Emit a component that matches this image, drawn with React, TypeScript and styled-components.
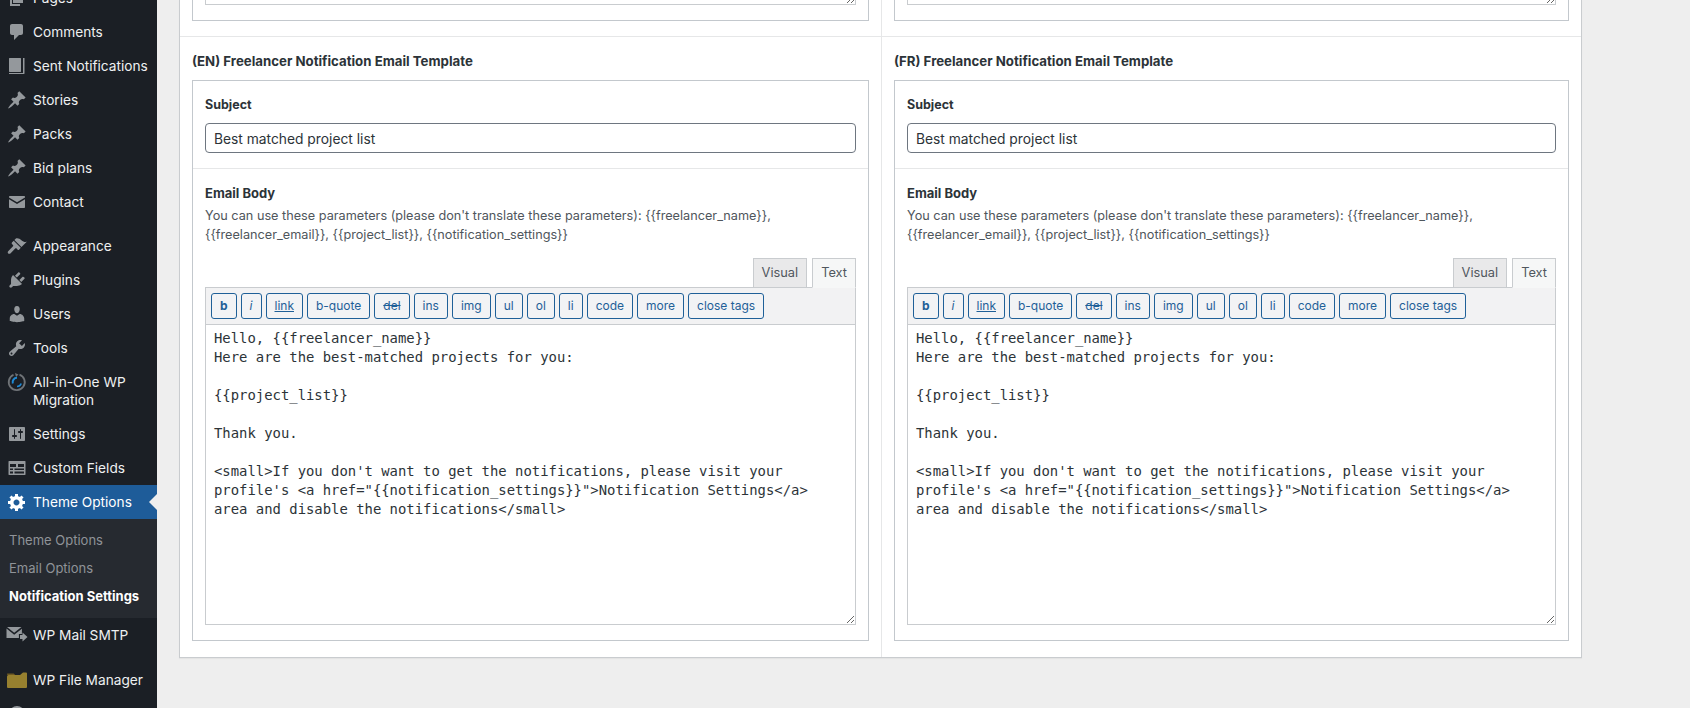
import React from 'react';
import styled, { createGlobalStyle } from 'styled-components';

const GlobalStyle = createGlobalStyle`
    html, body {
        margin: 0;
        height: 708px;
        overflow: hidden;
        background: #eeeeee;
        font-family: Inter, "Liberation Sans", sans-serif;
    }
`

const Page = styled.div`
    display: flex;
    height: 708px;
    overflow: hidden;
`
const Sidebar = styled.nav`
    width: 157px;
    flex-shrink: 0;
    background: #1b1f25;
    overflow: hidden;
`
/* the menu is scrolled, Pages is cut off by the top of the window */
const Menu = styled.ul`
    list-style: none;
    margin: -19px 0 0;
    padding: 0;
`
const Item = styled.li<{ $active?: boolean; $gap?: number }>`
    position: relative;
    display: flex;
    align-items: center;
    min-height: 34px;
    margin-top: ${p => p.$gap || 0}px;
    background: ${p => (p.$active ? '#1e5c99' : 'transparent')};
    color: ${p => (p.$active ? '#ffffff' : '#eef0f1')};
    font-size: 13.7px;
    line-height: 18px;
    box-sizing: border-box;
    padding: 8px 4px 8px 0;
`
const IconSlot = styled.span`
    width: 33px;
    flex-shrink: 0;
    display: flex;
    justify-content: center;
    align-items: center;
    align-self: flex-start;
    height: 18px;
    & svg {
        display: block;
    }
`
const Arrow = styled.span`
    position: absolute;
    right: 0;
    top: 50%;
    margin-top: -8px;
    border: 8px solid transparent;
    border-right-color: #eeeeee;
    border-left-width: 0;
`
const SubMenu = styled.ul`
    list-style: none;
    margin: 0;
    padding: 7px 0 8px;
    background: #262a30;
`
const SubItem = styled.li<{ $current?: boolean }>`
    height: 28px;
    line-height: 28px;
    padding-left: 9px;
    font-size: 13px;
    white-space: nowrap;
    color: ${p => (p.$current ? '#ffffff' : '#8f9398')};
    font-weight: ${p => (p.$current ? 700 : 400)};
`
const Main = styled.main`
    flex: 1;
    min-width: 0;
    padding-left: 22px;
`
const Card = styled.div`
    width: 1403px;
    box-sizing: border-box;
    background: #ffffff;
    border: 1px solid #c9cccf;
    border-top: none;
    display: grid;
    grid-template-columns: 702px 1fr;
    box-shadow: 0 1px 1px rgba(0,0,0,0.04);
`
const Column = styled.div<{ $last?: boolean; $first?: boolean }>`
    box-sizing: border-box;
    padding: ${p => (p.$first ? '0 12px 15px' : '15px 12px 16px')};
    border-right: ${p => (p.$last ? 'none' : '1px solid #e6e7e8')};
    border-bottom: ${p => (p.$first ? '1px solid #e6e7e8' : 'none')};
`
const Title = styled.h3`
    margin: 0 0 10px;
    font-size: 13.25px;
    line-height: 18px;
    font-weight: 700;
    color: #2c3338;
`
const Box = styled.div`
    border: 1px solid #c3c8cd;
`
const TopBox = styled(Box)`
    border-top: none;
    padding: 0 12px 15px;
    height: 21px;
    box-sizing: border-box;
    overflow: hidden;
`
const Section = styled.div<{ $divided?: boolean }>`
    padding: ${p => (p.$divided ? '16px 12px 15px' : '15px 12px')};
    border-bottom: ${p => (p.$divided ? '1px solid #e6e7e8' : 'none')};
`
const SubjectLabel = styled.label`
    display: block;
    font-size: 12.5px;
    line-height: 16px;
    font-weight: 700;
    color: #2c3338;
    margin-bottom: 10px;
`
const SubjectInput = styled.input`
    display: block;
    width: 100%;
    height: 30px;
    box-sizing: border-box;
    border: 1px solid #6e7680;
    border-radius: 4px;
    padding: 1px 8px 0;
    font: 13.8px Inter, sans-serif;
    color: #2c3338;
    background: #fff;
    outline: none;
`
const BodyLabel = styled.div`
    font-size: 13px;
    line-height: 18px;
    font-weight: 700;
    color: #2c3338;
    margin-bottom: 4px;
`
const Help = styled.p`
    margin: 0 0 14px;
    font-size: 12.7px;
    line-height: 19px;
    color: #4f565c;
`
const Tabs = styled.div`
    display: flex;
    justify-content: flex-end;
    gap: 5px;
    margin-bottom: -1px;
    position: relative;
`
const Tab = styled.span<{ $active?: boolean }>`
    box-sizing: border-box;
    height: 30px;
    line-height: 28px;
    padding: 0 8px;
    font-size: 12.8px;
    color: #50575e;
    background: ${p => (p.$active ? '#f6f7f7' : '#e9e9ea')};
    border: 1px solid #c9cccf;
    border-bottom-color: ${p => (p.$active ? '#f6f7f7' : '#c9cccf')};
`
const Toolbar = styled.div`
    display: flex;
    gap: 4px;
    height: 37px;
    box-sizing: border-box;
    padding: 5px 5px 0;
    background: #f2f2f3;
    border: 1px solid #c9cccf;
    border-bottom: none;
`
const TagButton = styled.button<{ $bold?: boolean; $italic?: boolean; $link?: boolean; $strike?: boolean }>`
    height: 26px;
    box-sizing: border-box;
    padding: 0 8px;
    border: 1px solid #1f6098;
    border-radius: 3px;
    background: #f2f3f5;
    color: #1f6098;
    font-family: Inter, sans-serif;
    font-size: 12px;
    line-height: 24px;
    font-weight: ${p => (p.$bold ? 700 : 400)};
    font-style: ${p => (p.$italic ? 'italic' : 'normal')};
    text-decoration: ${p => (p.$link ? 'underline' : p.$strike ? 'line-through' : 'none')};
`
const BodyArea = styled.textarea`
    display: block;
    width: 100%;
    height: 301px;
    box-sizing: border-box;
    margin: 0;
    padding: 4px 8px 3px;
    border: 1px solid #c9cccf;
    border-radius: 0;
    outline: none;
    font-family: "DejaVu Sans Mono", monospace;
    font-size: 13.9px;
    line-height: 19px;
    color: #2c3338;
    background: #fff;
`
const StubArea = styled(BodyArea)`
    height: 60px;
    margin-top: -55px;
`

const PIN = 'M10.44 3.02l1.82-1.82 6.36 6.35-1.83 1.82c-1.05-.68-2.48-.57-3.41.36l-.75.75c-.92.93-1.04 2.35-.35 3.41l-1.83 1.82-2.41-2.41-2.8 2.79c-.42.42-3.38 2.71-3.8 2.29s1.86-3.39 2.28-3.81l2.79-2.79L4.1 9.36l1.83-1.82c1.05.69 2.48.57 3.4-.36l.75-.75c.93-.92 1.05-2.35.36-3.41z';

const Icon: React.FC<{ d: string; color?: string; size?: number }> = ({ d, color = '#94989c', size = 20 }) => (
    <svg width={size} height={size} viewBox="0 0 20 20" fill={color}>
        <path d={d} />
    </svg>
);

const PagesIcon = () => (
    <Icon d="M6 15V2h10v13H6zm-1 1h8v2H3V5h2v11z" />
);
const CommentsIcon = () => (
    <Icon d="M5 2h9c1.1 0 2 .9 2 2v7c0 1.1-.9 2-2 2h-2l-5 5v-5H5c-1.1 0-2-.9-2-2V4c0-1.1.9-2 2-2z" />
);
const BookIcon = () => (
    <Icon size={20} d="M2.500 2h11c.3 0 .5.2.5.5v13c0 .3-.2.5-.5.5h-11c-.3 0-.5-.2-.5-.5v-13c0-.3.2-.5.5-.5zM16 2h1.500v15.500c0 .3-.2.5-.5.5H2v-1h14V2z" />
);
const MailIcon = () => (
    <Icon d="M3 4h14c.6 0 1 .4 1 1v.5l-8 4.800-8-4.800V5c0-.6.4-1 1-1zm-1 3.300l8 4.700 8-4.700V15c0 .6-.4 1-1 1H3c-.6 0-1-.4-1-1V7.300z" />
);
const BrushIcon = () => (
    <Icon d="M14.48 11.06L7.41 3.99l1.5-1.5c.5-.56 2.3-.47 3.51.32 1.21.8 1.43 1.28 2.91 2.1 1.18.64 2.45 1.26 4.45.85zm-.71.71L6.7 4.7 4.93 6.47c-.39.39-.39 1.02 0 1.41l1.06 1.06c.39.39.39 1.03 0 1.42L1.2 15.2c-.6.6-.6 1.6 0 2.2s1.6.6 2.2 0l4.8-4.8c.39-.39 1.03-.39 1.42 0l1.06 1.06c.39.39 1.02.39 1.41 0z" />
);
const PlugIcon = () => (
    <Icon d="M13.11 4.36L9.87 7.6 8 5.73l3.24-3.24c.35-.34 1.05-.2 1.56.32.52.51.66 1.21.31 1.55zm-8 1.77l.91-1.12 9.01 9.01-1.19.84c-.71.71-2.63 1.16-3.82 1.16H6.14L4.9 17.26c-.59.59-1.54.59-2.12 0-.59-.58-.59-1.53 0-2.12l1.24-1.24v-3.88c0-1.13.4-3.19 1.09-3.89zm7.26 3.97l3.24-3.24c.34-.35 1.04-.21 1.55.31.52.51.66 1.21.31 1.55l-3.24 3.25z" />
);
const UserIcon = () => (
    <Icon d="M10 9.25c-2.27 0-2.73-3.44-2.73-3.44C7 4.02 7.82 2 9.97 2c2.16 0 2.98 2.02 2.71 3.81 0 0-.41 3.44-2.68 3.44zm0 2.57L12.72 10c2.39 0 4.52 2.33 4.52 4.53v2.49s-3.65 1.13-7.24 1.13c-3.65 0-7.24-1.13-7.24-1.13v-2.49c0-2.25 1.94-4.48 4.47-4.48z" />
);
const WrenchIcon = () => (
    <Icon d="M16.68 9.77c-1.34 1.34-3.3 1.67-4.95.99l-5.41 6.52c-.99.99-2.59.99-3.58 0s-.99-2.59 0-3.57l6.52-5.42c-.68-1.65-.35-3.61.99-4.95 1.28-1.28 3.12-1.62 4.72-1.06l-2.89 2.89 2.82 2.82 2.86-2.87c.53 1.58.18 3.39-1.08 4.65zM3.81 16.21c.4.39 1.04.39 1.43 0 .4-.4.4-1.04 0-1.43-.39-.4-1.03-.4-1.43 0-.39.39-.39 1.03 0 1.43z" />
);
const SlidersIcon = () => (
    <Icon d="M18 16V4c0-.55-.45-1-1-1H3c-.55 0-1 .45-1 1v12c0 .55.45 1 1 1h14c.55 0 1-.45 1-1zM8 11h1c.55 0 1 .45 1 1s-.45 1-1 1H8v1.5c0 .28-.22.5-.5.5s-.5-.22-.5-.5V13H6c-.55 0-1-.45-1-1s.45-1 1-1h1V5.5c0-.28.22-.5.5-.5s.5.22.5.5V11zm5-2h-1c-.55 0-1-.45-1-1s.45-1 1-1h1V5.5c0-.28.22-.5.5-.5s.5.22.5.5V7h1c.55 0 1 .45 1 1s-.45 1-1 1h-1v5.5c0 .28-.22.5-.5.5s-.5-.22-.5-.5V9z" />
);
const GearIcon = () => (
    <Icon color="#ffffff" d="M18 12h-2.18c-.17.7-.44 1.35-.81 1.93l1.54 1.54-2.1 2.1-1.54-1.54c-.58.36-1.23.63-1.91.79V19H8v-2.18c-.68-.16-1.33-.43-1.91-.79l-1.54 1.54-2.12-2.12 1.54-1.54c-.36-.58-.63-1.23-.79-1.91H1V9.03h2.17c.16-.7.44-1.35.8-1.94L2.43 5.55l2.1-2.1 1.54 1.54c.58-.37 1.24-.64 1.93-.81V2h3v2.18c.68.16 1.33.43 1.91.79l1.54-1.54 2.12 2.12-1.54 1.54c.36.59.64 1.24.8 1.94H18V12zm-8.5 1.5c1.66 0 3-1.34 3-3s-1.34-3-3-3-3 1.34-3 3 1.34 3 3 3z" />
);
const TableIcon = () => (
    <svg width="20" height="20" viewBox="0 0 20 20" fill="#94989c" fillRule="evenodd">
        <path d="M2 3h16c.3 0 .5.2.5.5v13c0 .3-.2.5-.5.5H2c-.3 0-.5-.2-.5-.5v-13c0-.3.2-.5.5-.5zm1 3v3h6V6H3zm8 0v3h6V6h-6zm-8 4.500V12h3v-1.500H3zm4.500 0V12H17v-1.500H7.500zM3 13.500V15.500h3v-2H3zm4.500 0v2H17v-2H7.500z" />
    </svg>
);
const MigrationIcon = () => (
    <svg width="20" height="20" viewBox="0 0 20 20" fill="none">
        <path d="M6.500 2.800A8 8 0 1 0 12.500 2.600" stroke="#6f7377" strokeWidth="1.800" />
        <path d="M8 1l3.500 1.600L9 5z" fill="#6f7377" />
        <path d="M5.800 11.500A4.400 4.400 0 0 1 10 5.800" stroke="#1e8ad6" strokeWidth="2" />
        <path d="M10 14.400a4.400 4.400 0 0 0 4.200-3" stroke="#1e8ad6" strokeWidth="1.500" />
    </svg>
);
const SmtpIcon = () => (
    <svg width="22" height="20" viewBox="0 0 22 20" fill="#94989c">
        <path d="M1 2h14.500L8.200 7.800 1 2zm-.5 1.500L8.200 9.700l7.700-6V9h-3v4H.5V3.500z" />
        <path d="M14 10h2.500V7.500L21.500 12l-5 4.500V14H14z" />
    </svg>
);
const FolderIcon = () => (
    <svg width="22" height="20" viewBox="0 0 22 20">
        <path d="M1.200 3.500h6.500l1.500 1.500H1.200z" fill="#6f5a22" />
        <path d="M1 6.500 Q1 5 2.500 5 H14 L17 2.500 H20 Q21 2.500 21 3.500 V17 Q21 18 20 18 H2 Q1 18 1 17z" fill="#97802f" />
    </svg>
);
const NextPluginIcon = () => (
    <svg width="20" height="20" viewBox="0 0 20 20">
        <circle cx="10" cy="10" r="8" fill="#94989c" />
    </svg>
);

const BUTTONS = ['b', 'i', 'link', 'b-quote', 'del', 'ins', 'img', 'ul', 'ol', 'li', 'code', 'more', 'close tags'];

const TEMPLATE = `Hello, {{freelancer_name}}
Here are the best-matched projects for you:

{{project_list}}

Thank you.

<small>If you don't want to get the notifications, please visit your profile's <a href="{{notification_settings}}">Notification Settings</a> area and disable the notifications</small>`;

const TemplateColumn: React.FC<{ lang: string; last?: boolean }> = ({ lang, last }) => (
    <Column $last={last}>
        <Title>({lang}) Freelancer Notification Email Template</Title>
        <Box>
            <Section $divided>
                <SubjectLabel>Subject</SubjectLabel>
                <SubjectInput readOnly value="Best matched project list" />
            </Section>
            <Section>
                <BodyLabel>Email Body</BodyLabel>
                <Help>
                    You can use these parameters (please don't translate these parameters): {'{{freelancer_name}}'},
                    <br />
                    {'{{freelancer_email}}, {{project_list}}, {{notification_settings}}'}
                </Help>
                <Tabs>
                    <Tab>Visual</Tab>
                    <Tab $active>Text</Tab>
                </Tabs>
                <Toolbar>
                    {BUTTONS.map(b => (
                        <TagButton
                            key={b}
                            type="button"
                            $bold={b === 'b'}
                            $italic={b === 'i'}
                            $link={b === 'link'}
                            $strike={b === 'del'}
                        >
                            {b}
                        </TagButton>
                    ))}
                </Toolbar>
                <BodyArea readOnly value={TEMPLATE} />
            </Section>
        </Box>
    </Column>
);

export default function App() {
    return (
        <Page>
            <GlobalStyle />
            <Sidebar>
                <Menu>
                    <Item><IconSlot><PagesIcon /></IconSlot>Pages</Item>
                    <Item><IconSlot><CommentsIcon /></IconSlot>Comments</Item>
                    <Item><IconSlot><BookIcon /></IconSlot>Sent Notifications</Item>
                    <Item><IconSlot><Icon d={PIN} /></IconSlot>Stories</Item>
                    <Item><IconSlot><Icon d={PIN} /></IconSlot>Packs</Item>
                    <Item><IconSlot><Icon d={PIN} /></IconSlot>Bid plans</Item>
                    <Item><IconSlot><MailIcon /></IconSlot>Contact</Item>
                    <Item $gap={10}><IconSlot><BrushIcon /></IconSlot>Appearance</Item>
                    <Item><IconSlot><PlugIcon /></IconSlot>Plugins</Item>
                    <Item><IconSlot><UserIcon /></IconSlot>Users</Item>
                    <Item><IconSlot><WrenchIcon /></IconSlot>Tools</Item>
                    <Item><IconSlot><MigrationIcon /></IconSlot>All-in-One WP<br />Migration</Item>
                    <Item><IconSlot><SlidersIcon /></IconSlot>Settings</Item>
                    <Item><IconSlot><TableIcon /></IconSlot>Custom Fields</Item>
                    <Item $active><IconSlot><GearIcon /></IconSlot>Theme Options<Arrow /></Item>
                    <SubMenu>
                        <SubItem>Theme Options</SubItem>
                        <SubItem>Email Options</SubItem>
                        <SubItem $current>Notification Settings</SubItem>
                    </SubMenu>
                    <Item><IconSlot><SmtpIcon /></IconSlot>WP Mail SMTP</Item>
                    <Item $gap={11}><IconSlot><FolderIcon /></IconSlot>WP File Manager</Item>
                    <Item><IconSlot><NextPluginIcon /></IconSlot></Item>
                </Menu>
            </Sidebar>
            <Main>
                <Card>
                    <Column $first>
                        <TopBox><StubArea readOnly /></TopBox>
                    </Column>
                    <Column $first $last>
                        <TopBox><StubArea readOnly /></TopBox>
                    </Column>
                    <TemplateColumn lang="EN" />
                    <TemplateColumn lang="FR" last />
                </Card>
            </Main>
        </Page>
    );
}
